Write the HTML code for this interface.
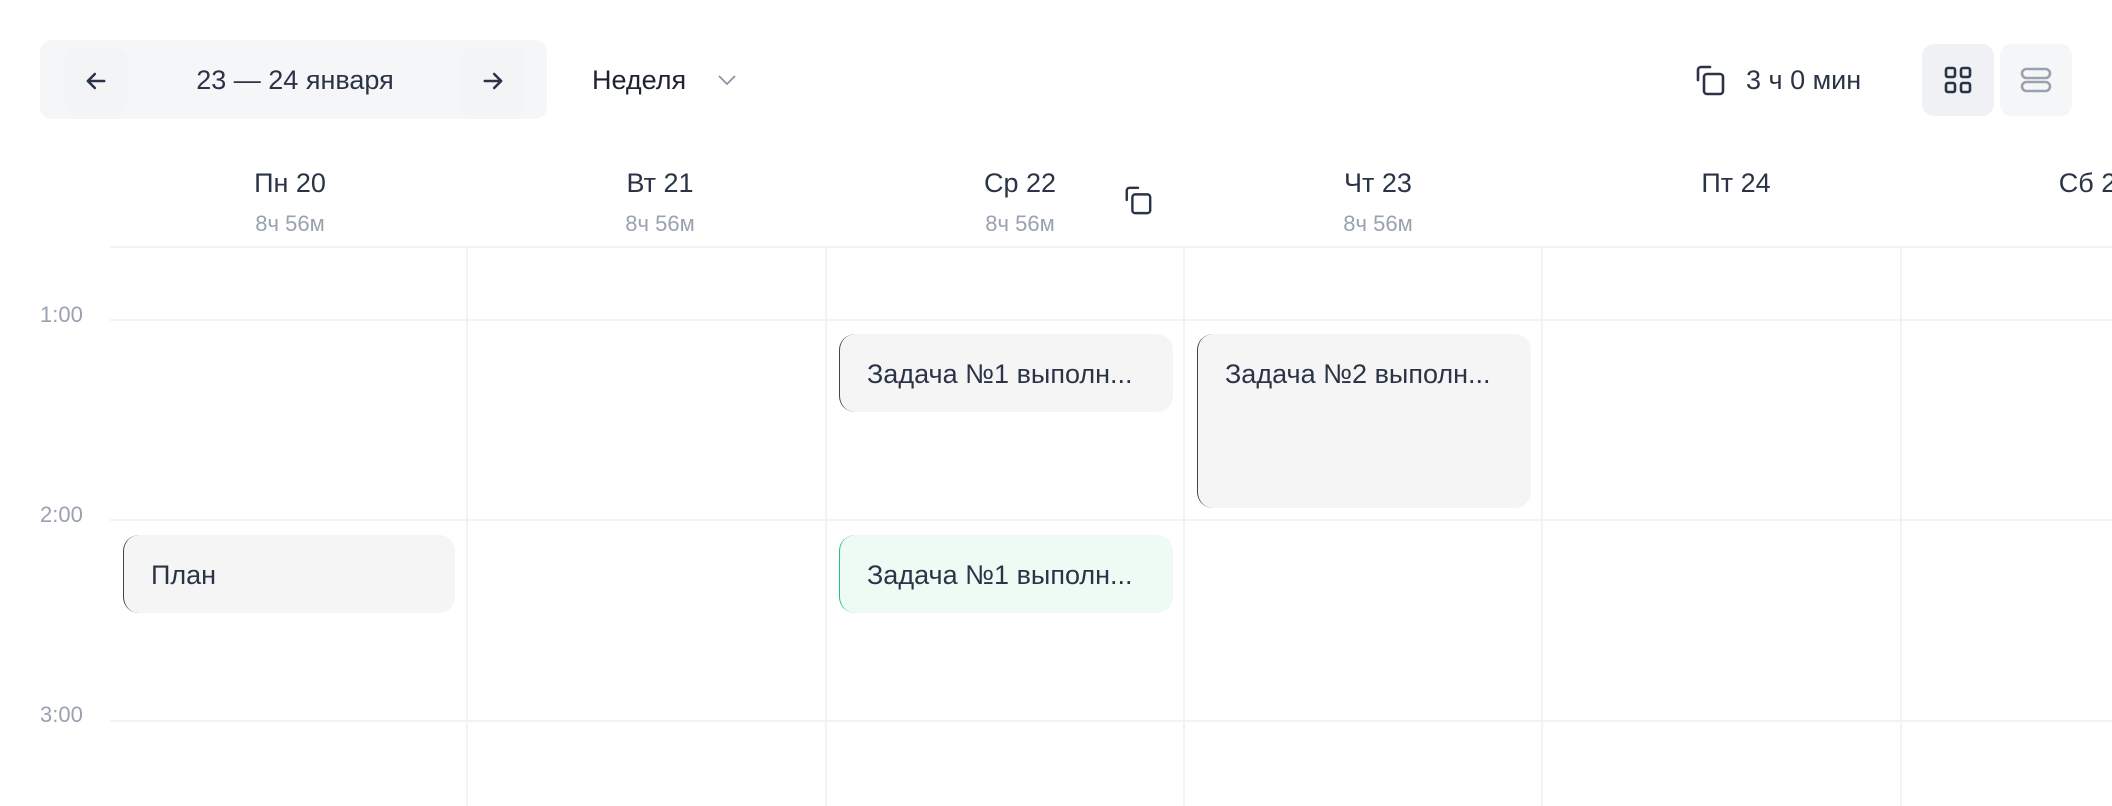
<!DOCTYPE html>
<html><head><meta charset="utf-8"><style>
*{margin:0;padding:0;box-sizing:border-box}
body{width:2112px;height:806px;background:#fff;position:relative;overflow:hidden;font-family:"Liberation Sans","Noto Sans CJK JP",sans-serif;color:#2b3346}
.a{position:absolute}
.hl{position:absolute;left:110px;right:0;height:2px;background:#f2f3f5}
.vl{position:absolute;top:247px;bottom:0;width:2px;background:#f2f3f5}
.day{position:absolute;top:168px;width:200px;text-align:center;font-size:27px;color:#2b3346}
.sub{position:absolute;top:211px;width:200px;text-align:center;font-size:22px;color:#9aa1b1}
.tm{position:absolute;left:40px;font-size:22px;color:#9aa1b1}
.ev{position:absolute;background:#f5f5f5;border-radius:16px;border-left:1.5px solid #444;font-size:27px;color:#2b3346;padding:25px 0 0 27px;white-space:nowrap;overflow:hidden}
</style></head><body>
<div class="a" style="left:40px;top:40px;width:507px;height:79px;background:#f5f6f8;border-radius:12px"></div>
<div class="a" style="left:65px;top:48px;width:63px;height:65px;background:#f3f4f6;border-radius:10px"></div>
<div class="a" style="left:461px;top:48px;width:63px;height:65px;background:#f3f4f6;border-radius:10px"></div>
<svg class="a" style="left:82px;top:67px" width="28" height="28" viewBox="0 0 24 24" fill="none" stroke="#2b3346" stroke-width="2.2" stroke-linecap="round" stroke-linejoin="round"><path d="M19 12H5M11 6l-6 6 6 6"/></svg>
<svg class="a" style="left:479px;top:67px" width="28" height="28" viewBox="0 0 24 24" fill="none" stroke="#2b3346" stroke-width="2.2" stroke-linecap="round" stroke-linejoin="round"><path d="M5 12h14M13 6l6 6-6 6"/></svg>
<div class="a" style="left:150px;top:65px;width:290px;text-align:center;font-size:27px">23 — 24 января</div>
<div class="a" style="left:592px;top:65px;font-size:27px;color:#1f2330">Неделя</div>
<svg class="a" style="left:716px;top:72px" width="22" height="16" viewBox="0 0 22 16" fill="none" stroke="#8d94a4" stroke-width="1.8"><path d="M3 4l8 8 8-8"/></svg>
<svg class="a" style="left:1694px;top:64px" width="32" height="32" viewBox="0 0 32 32" fill="none" stroke="#2b3346" stroke-width="2.6" stroke-linecap="round"><path d="M4 16V6a3 3 0 0 1 3-3h9"/><rect x="10" y="10" width="19" height="20" rx="3"/></svg>
<div class="a" style="left:1746px;top:65px;font-size:27px">3 ч 0 мин</div>
<div class="a" style="left:1922px;top:44px;width:72px;height:72px;background:#eff1f4;border-radius:12px"></div>
<div class="a" style="left:2000px;top:44px;width:72px;height:72px;background:#f5f6f8;border-radius:12px"></div>
<svg class="a" style="left:1944px;top:66px" width="28" height="28" viewBox="0 0 28 28" fill="none" stroke="#2b3346" stroke-width="2.6"><rect x="2" y="2" width="9" height="9" rx="2"/><rect x="17" y="2" width="9" height="9" rx="2"/><rect x="2" y="17" width="9" height="9" rx="2"/><rect x="17" y="17" width="9" height="9" rx="2"/></svg>
<svg class="a" style="left:2020px;top:66px" width="32" height="28" viewBox="0 0 32 28" fill="none" stroke="#9aa1b1" stroke-width="2.6"><rect x="2" y="3" width="28" height="9" rx="4.5"/><rect x="2" y="16" width="28" height="9" rx="4.5"/></svg>

<div class="day" style="left:190px">Пн 20</div><div class="sub" style="left:190px">8ч 56м</div>
<div class="day" style="left:560px">Вт 21</div><div class="sub" style="left:560px">8ч 56м</div>
<div class="day" style="left:920px">Ср 22</div><div class="sub" style="left:920px">8ч 56м</div>
<div class="day" style="left:1278px">Чт 23</div><div class="sub" style="left:1278px">8ч 56м</div>
<div class="day" style="left:1636px">Пт 24</div>
<div class="day" style="left:1995px">Сб 25</div>
<svg class="a" style="left:1123px;top:184px" width="30" height="32" viewBox="0 0 32 32" fill="none" stroke="#2b3346" stroke-width="2.6" stroke-linecap="round"><path d="M4 16V6a3 3 0 0 1 3-3h9"/><rect x="10" y="10" width="19" height="20" rx="3"/></svg>

<div class="hl" style="top:246px"></div>
<div class="hl" style="top:319px"></div>
<div class="hl" style="top:519px"></div>
<div class="hl" style="top:720px"></div>
<div class="vl" style="left:466px"></div>
<div class="vl" style="left:825px"></div>
<div class="vl" style="left:1183px"></div>
<div class="vl" style="left:1541px"></div>
<div class="vl" style="left:1900px"></div>
<div class="tm" style="top:302px">1:00</div>
<div class="tm" style="top:502px">2:00</div>
<div class="tm" style="top:702px">3:00</div>

<div class="ev" style="left:839px;top:334px;width:334px;height:78px">Задача №1 выполн...</div>
<div class="ev" style="left:1197px;top:334px;width:334px;height:174px">Задача №2 выполн...</div>
<div class="ev" style="left:123px;top:535px;width:332px;height:78px">План</div>
<div class="ev" style="left:839px;top:535px;width:334px;height:78px;background:#edfbf4;border-left-color:#22c17a">Задача №1 выполн...</div>
</body></html>
